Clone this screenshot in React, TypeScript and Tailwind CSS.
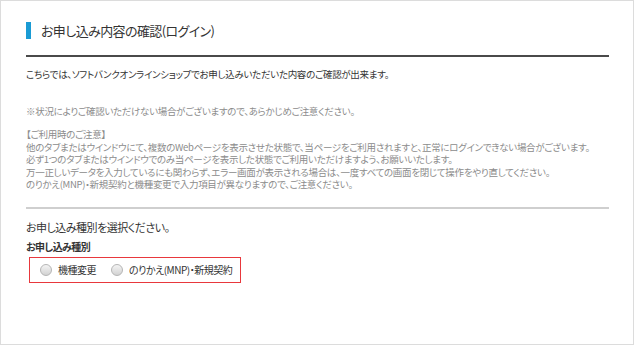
import React from 'react';

const Radio: React.FC<{ label: string }> = ({ label }) => (
  <label className="flex items-center">
    <span className="w-[12px] h-[12px] rounded-full border border-[#b5b5b5] bg-gradient-to-b from-[#f4f4f4] to-[#d2d2d2]" />
    <span className="ml-[6px] text-[10px] leading-[14px] tracking-[-0.5px] text-[#333]">{label}</span>
  </label>
);

const App: React.FC = () => {
  return (
    <div className="w-[634px] h-[345px] border border-[#dcdcdc] bg-white font-['Noto_Sans_CJK_JP','Noto_Sans',sans-serif] [font-feature-settings:'palt']">
      <div className="pl-[25px] pr-[24px] pt-[21px]">
        {/* heading */}
        <div className="flex items-center h-[17px]">
          <div className="w-[5px] h-[17px] bg-[#1a9bd4]" />
          <h1 className="ml-[10px] text-[13px] leading-[17px] tracking-[-0.6px] text-[#333]">
            お申し込み内容の確認(ログイン)
          </h1>
        </div>
        <div className="mt-[16px] h-[2px] bg-[#4a4a4a]" />

        <p className="mt-[10px] text-[9.5px] leading-[14px] tracking-[-0.3px] text-[#333]">
          こちらでは、ソフトバンクオンラインショップでお申し込みいただいた内容のご確認が出来ます。
        </p>

        <p className="mt-[23px] text-[9.5px] leading-[14px] tracking-[-0.3px] text-[#8c8c8c]">
          ※状況によりご確認いただけない場合がございますので、あらかじめご注意ください。
        </p>

        <div className="mt-[10px] text-[9.5px] leading-[12.5px] tracking-[-0.3px] text-[#8c8c8c]">
          <p>【ご利用時のご注意】</p>
          <p>他のタブまたはウインドウにて、複数のWebページを表示させた状態で、当ページをご利用されますと、正常にログインできない場合がございます。</p>
          <p>必ず1つのタブまたはウインドウでのみ当ページを表示した状態でご利用いただけますよう、お願いいたします。</p>
          <p>万一正しいデータを入力しているにも関わらず、エラー画面が表示される場合は、一度すべての画面を閉じて操作をやり直してください。</p>
          <p>のりかえ(MNP)・新規契約と機種変更で入力項目が異なりますので、ご注意ください。</p>
        </div>

        <div className="mt-[16px] h-[2px] bg-[#cfcfcf]" />

        <h2 className="mt-[10px] text-[11px] leading-[16px] tracking-[-0.5px] text-[#333]">
          お申し込み種別を選択ください。
        </h2>
        <h3 className="mt-[5px] text-[10px] leading-[14px] tracking-[-0.6px] font-bold text-[#333]">
          お申し込み種別
        </h3>

        <div className="mt-[3px] ml-[3px] w-fit h-[26px] border border-[#e8383d] flex items-center pl-[10px] pr-[8px] gap-[15px]">
          <Radio label="機種変更" />
          <Radio label="のりかえ(MNP)・新規契約" />
        </div>
      </div>
    </div>
  );
};

export default App;
